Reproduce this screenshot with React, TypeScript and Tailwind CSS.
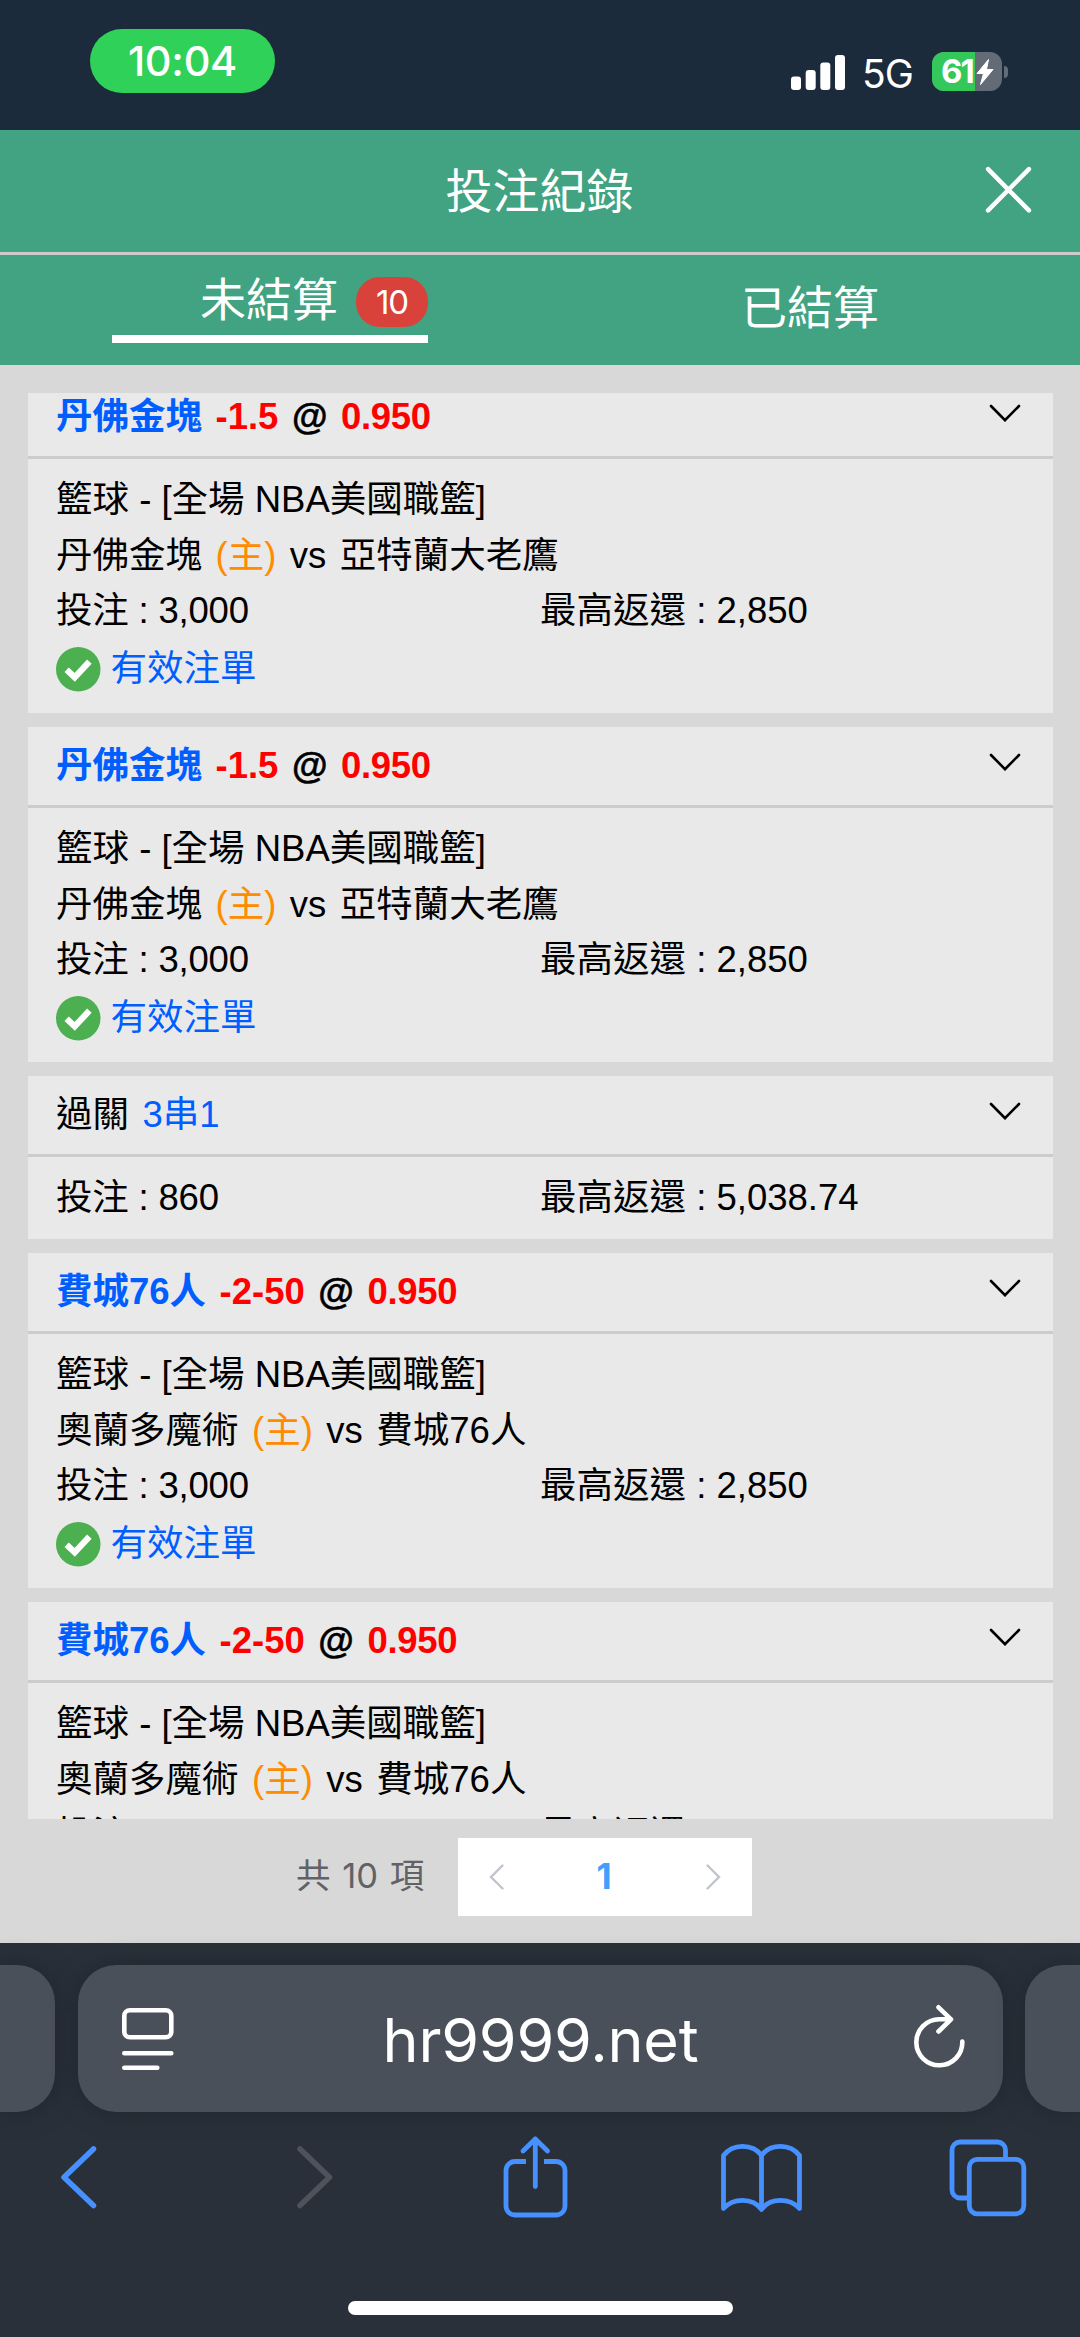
import type { ReactNode } from 'react'

type SingleBet = {
  kind: 'single'
  team: string
  handicap: string
  odds: string
  league: string
  home: string
  away: string
  stake: string
  maxReturn: string
}

type ParlayBet = {
  kind: 'parlay'
  combo: string
  stake: string
  maxReturn: string
}

type Bet = SingleBet | ParlayBet

const nuggets: SingleBet = {
  kind: 'single',
  team: '丹佛金塊',
  handicap: '-1.5',
  odds: '0.950',
  league: '籃球 - [全場 NBA美國職籃]',
  home: '丹佛金塊',
  away: '亞特蘭大老鷹',
  stake: '3,000',
  maxReturn: '2,850',
}

const sixers: SingleBet = {
  kind: 'single',
  team: '費城76人',
  handicap: '-2-50',
  odds: '0.950',
  league: '籃球 - [全場 NBA美國職籃]',
  home: '奧蘭多魔術',
  away: '費城76人',
  stake: '3,000',
  maxReturn: '2,850',
}

const bets: Bet[] = [
  nuggets,
  nuggets,
  { kind: 'parlay', combo: '3串1', stake: '860', maxReturn: '5,038.74' },
  sixers,
  sixers,
]

function StatusBar() {
  return (
    <div className="h-[130px] shrink-0 bg-[#1c2b3b] flex items-start justify-between pl-[90px] pr-[72px] text-white font-['Inter',sans-serif]">
      <div className="mt-[29px] w-[185px] h-[64px] pt-[2px] rounded-full bg-[#30d158] flex items-center justify-center text-[41.5px] leading-none font-medium tracking-[-0.3px]">
        10:04
      </div>

      <div className="mt-[52px] h-[39px] flex items-center">
        <svg width="55" height="36" viewBox="0 0 55 36" fill="#fff">
          <rect x="0" y="22.5" width="10" height="13.5" rx="3" />
          <rect x="14.7" y="16" width="10" height="20" rx="3" />
          <rect x="29.3" y="8.5" width="10" height="27.5" rx="3" />
          <rect x="44" y="1" width="10" height="35" rx="3" />
        </svg>
        <span className="ml-[16px] mt-[3px] w-[52px] text-[39px] leading-none tracking-[-1px]">5G</span>
        <div className="ml-[18px] relative w-[70px] h-[39px] rounded-[12px] overflow-hidden bg-[#636b77] flex items-center">
          <div className="absolute inset-y-0 left-0 w-[43px] bg-[#34c759]" />
          <span className="relative ml-[9px] w-[34px] text-[33px] leading-none font-bold tracking-[-2px]">61</span>
          <svg className="relative" width="20" height="28" viewBox="0 0 20 28" fill="#fff">
            <path d="M13.5 1.5 2 15.5h6.5L5.5 26.5 18 11.5h-6.5z" stroke="#fff" strokeLinejoin="round" />
          </svg>
        </div>
        <div className="ml-[2px] w-[4px] h-[12px] rounded-r-full bg-[#636b77]" />
      </div>
    </div>
  )
}

function TitleBar() {
  return (
    <div className="h-[125px] shrink-0 bg-[#41a381] border-b-3 border-[#cbcbcb] grid grid-cols-[1fr_auto_1fr] items-center text-white">
      <span />
      <h1 className="-ml-[1px] text-[47px] leading-none">投注紀錄</h1>
      <svg className="justify-self-end mr-[48px] mb-[4px]" width="47" height="47" viewBox="0 0 46 46" fill="none" stroke="#fff" strokeWidth="4.4" strokeLinecap="round">
        <path d="M3 3 43 43.5M43 3 3 43.5" />
      </svg>
    </div>
  )
}

function Tabs() {
  return (
    <div className="h-[110px] shrink-0 bg-[#41a381] grid grid-cols-2 text-white text-[46px] leading-none">
      <div className="flex justify-center">
        <div className="w-[316px] h-[88px] border-b-8 border-white flex items-center justify-end">
          <span className="mt-[9px]">未結算</span>
          <span className="ml-[18px] mt-[14px] w-[72px] h-[50px] rounded-[24px] bg-[#d9413b] flex items-center justify-center text-[33px] tracking-[-1px] font-['Inter',sans-serif]">
            10
          </span>
        </div>
      </div>
      <div className="flex items-center justify-center pb-[4px]">已結算</div>
    </div>
  )
}

function CardHeader({ children }: { children: ReactNode }) {
  return (
    <div className="h-[81px] border-b-3 border-[#cccccc] pl-[28.5px] pr-[32px] flex items-center justify-between">
      <div className="flex gap-[13.5px]">{children}</div>
      <svg className="mb-[8px]" width="32" height="18" viewBox="0 0 32 18" fill="none" stroke="#000" strokeWidth="2.6" strokeLinecap="round">
        <path d="m2 2 14 14.2L30 2" />
      </svg>
    </div>
  )
}

function Amounts({ stake, maxReturn }: { stake: string; maxReturn: string }) {
  return (
    <div className="grid grid-cols-2">
      <span className="tracking-[-0.2px]">投注 : {stake}</span>
      <span>最高返還 : {maxReturn}</span>
    </div>
  )
}

function SingleCard({ bet }: { bet: SingleBet }) {
  return (
    <div className="h-[335px] shrink-0 bg-[#e9e9e9]">
      <CardHeader>
        <span className="font-bold text-[#005eff]">{bet.team}</span>
        <span className="font-bold text-[#ff0000]">{bet.handicap}</span>
        <span className="font-bold [-webkit-text-stroke:0.5px_#000]">@</span>
        <span className="font-bold text-[#ff0000] tracking-[-0.3px]">{bet.odds}</span>
      </CardHeader>
      <div className="px-[28.5px] pt-[13px]">
        <p>{bet.league}</p>
        <p className="flex gap-[13.5px]">
          <span>{bet.home}</span>
          <span className="text-[#ff8c00]">(主)</span>
          <span>vs</span>
          <span>{bet.away}</span>
        </p>
        <Amounts stake={bet.stake} maxReturn={bet.maxReturn} />
        <div className="flex items-center gap-[10px] pt-[2px] text-[#005eff]">
          <svg className="mt-[2px]" width="44.5" height="44.5" viewBox="0 0 44 44">
            <circle cx="22" cy="22" r="22" fill="#4caf50" />
            <path d="m10.5 22.5 8 7.5L33 14.5" fill="none" stroke="#fff" strokeWidth="6.2" />
          </svg>
          <span>有效注單</span>
        </div>
      </div>
    </div>
  )
}

function ParlayCard({ bet }: { bet: ParlayBet }) {
  return (
    <div className="h-[163px] shrink-0 bg-[#e9e9e9]">
      <CardHeader>
        <span>過關</span>
        <span className="text-[#005eff]">{bet.combo}</span>
      </CardHeader>
      <div className="px-[28.5px] pt-[13px]">
        <Amounts stake={bet.stake} maxReturn={bet.maxReturn} />
      </div>
    </div>
  )
}

function BetList() {
  return (
    <div className="mt-[28px] mx-[27.5px] h-[1426px] shrink-0 overflow-hidden">
      {/* scrolled slightly, so the first header is cut off */}
      <div className="-mt-[15px] flex flex-col gap-[14px] text-[36.5px] leading-[55.5px] text-black">
        {bets.map((bet, i) =>
          bet.kind === 'single' ? <SingleCard key={i} bet={bet} /> : <ParlayCard key={i} bet={bet} />
        )}
      </div>
    </div>
  )
}

function Pagination() {
  return (
    <div className="h-[124px] shrink-0 pt-[19px] pl-[296px] flex items-start">
      <div className="w-[162px] h-[78px] pb-[2px] flex items-center text-[34.5px] text-[#606266] [word-spacing:2px] font-['Inter','Noto_Sans_CJK_TC',sans-serif]">
        共 10 項
      </div>
      <div className="w-[294px] h-[78px] bg-white px-[31px] flex items-center justify-between">
        <svg width="15" height="26" viewBox="0 0 15 26" fill="none" stroke="#c0c4cc" strokeWidth="2.4" strokeLinecap="round">
          <path d="M13.5 1.5 2 13l11.5 11.5" />
        </svg>
        <span className="mr-[2px] mb-[2px] text-[35px] leading-none font-bold text-[#409eff] font-['Inter',sans-serif]">1</span>
        <svg width="15" height="26" viewBox="0 0 15 26" fill="none" stroke="#c0c4cc" strokeWidth="2.4" strokeLinecap="round">
          <path d="M1.5 1.5 13 13 1.5 24.5" />
        </svg>
      </div>
    </div>
  )
}

function BrowserBar() {
  return (
    <div className="h-[394px] shrink-0 bg-[#293039] pt-[22px] flex flex-col">
      {/* address bar, with the neighbouring tabs peeking in */}
      <div className="h-[147px] flex justify-between">
        <div className="w-[55px] rounded-r-[38px] bg-[#495059] shadow-[0_0_24px_#20262f]" />
        <div className="w-[925px] rounded-[38px] bg-[#495059] shadow-[0_0_24px_#20262f] flex items-center justify-between pl-[43px] pr-[37px]">
          <svg className="mt-[1px]" width="54" height="64" viewBox="0 0 54 64" fill="none" stroke="#fff" strokeWidth="4.6" strokeLinecap="round">
            <rect x="3.3" y="3.3" width="47" height="27" rx="5.5" />
            <path d="M3.3 46.3h47M3.3 60.8h33" />
          </svg>
          <span className="mr-[7px] mt-[3px] text-white text-[61px] leading-none tracking-[-0.2px] font-['Inter',sans-serif]">hr9999.net</span>
          <svg className="mb-[6px]" width="52" height="64" viewBox="0 0 52 64" fill="none" stroke="#fff" strokeWidth="4.6" strokeLinecap="round" strokeLinejoin="round">
            <path d="M48.3 37.5A23 23 0 1 1 25.3 15.300h11M24.500 3.300 37 15.300 24.500 27.500" />
          </svg>
        </div>
        <div className="w-[55px] rounded-l-[38px] bg-[#495059] shadow-[0_0_24px_#20262f]" />
      </div>

      <div className="mt-[23px] h-[84px] flex items-center pl-[60px]">
        <svg width="38" height="64" viewBox="0 0 38 64" fill="none" stroke="#4691ff" strokeWidth="5.5" strokeLinecap="round" strokeLinejoin="round">
          <path d="M33.5 4 4 32.3 33.5 60.5" />
        </svg>
        <svg className="ml-[198px]" width="38" height="64" viewBox="0 0 38 64" fill="none" stroke="#4e535b" strokeWidth="5.5" strokeLinecap="round" strokeLinejoin="round">
          <path d="M4 4 33.5 32.3 4 60.5" />
        </svg>
        <svg className="ml-[169px]" width="65" height="84" viewBox="0 0 65 84" fill="none" stroke="#4691ff" strokeWidth="4.8">
          <path d="M23 26.5H12a9 9 0 0 0-9 9V71a9 9 0 0 0 9 9h41a9 9 0 0 0 9-9V35.5a9 9 0 0 0-9-9H41" />
          <path d="M32.3 51.5V4M20 16 32.3 4 44.5 16" strokeLinecap="round" strokeLinejoin="round" />
        </svg>
        <svg className="ml-[153px] mt-[2px]" width="81" height="70" viewBox="0 0 81 70" fill="none" stroke="#4691ff" strokeWidth="4.8" strokeLinejoin="round">
          <path d="M40.5 12.5C36 6 29 3.3 21.5 3.3S7 6.5 2.5 12.5v53C7 60.5 14 57.3 21.5 57.3S36 60 40.5 66.5C45 60 52 57.3 59.5 57.3S74 60.5 78.5 65.5v-53C74 6.5 67 3.3 59.5 3.3S45 6 40.5 12.5z" />
          <path d="M40.5 12.5v54" />
        </svg>
        <svg className="ml-[147px] mt-[2px]" width="78" height="78" viewBox="0 0 78 78" fill="none" stroke="#4691ff" strokeWidth="4.8">
          <path d="M56.5 19v-8a8 8 0 0 0-8-8H11a8 8 0 0 0-8 8v40a8 8 0 0 0 8 8h9" />
          <rect x="20.3" y="20.3" width="54.5" height="54.5" rx="8" />
        </svg>
      </div>

      {/* home indicator */}
      <div className="mt-[82px] ml-[348px] w-[385px] h-[14px] rounded-full bg-white" />
    </div>
  )
}

function App() {
  return (
    <div className="w-[1080px] h-[2337px] overflow-hidden flex flex-col bg-[#d8d8d8] font-['Liberation_Sans','Noto_Sans_CJK_TC',sans-serif]">
      <StatusBar />
      <TitleBar />
      <Tabs />
      <BetList />
      <Pagination />
      <BrowserBar />
    </div>
  )
}

export default App
